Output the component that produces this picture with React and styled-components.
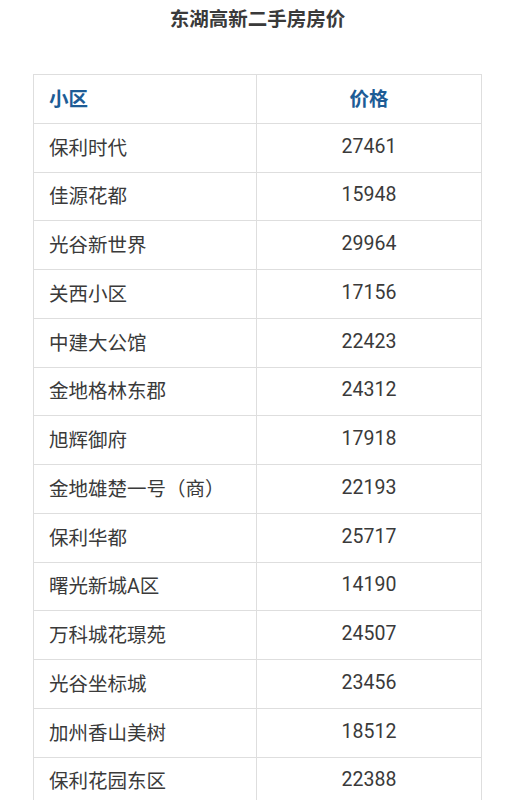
import styled, { createGlobalStyle } from "styled-components";

const rows = [
  ["保利时代", "27461"],
  ["佳源花都", "15948"],
  ["光谷新世界", "29964"],
  ["关西小区", "17156"],
  ["中建大公馆", "22423"],
  ["金地格林东郡", "24312"],
  ["旭辉御府", "17918"],
  ["金地雄楚一号（商）", "22193"],
  ["保利华都", "25717"],
  ["曙光新城A区", "14190"],
  ["万科城花璟苑", "24507"],
  ["光谷坐标城", "23456"],
  ["加州香山美树", "18512"],
  ["保利花园东区", "22388"],
];

function App() {
  return (
    <Page>
      <GlobalStyle />
      <Title>东湖高新二手房房价</Title>
      <Table>
        <Row>
          <Cell head>小区</Cell>
          <Cell head center>价格</Cell>
        </Row>
        {rows.map(([name, price]) => (
          <Row key={name}>
            <Cell>{name}</Cell>
            <Cell center>{price}</Cell>
          </Row>
        ))}
      </Table>
    </Page>
  );
}

const GlobalStyle = createGlobalStyle`
  body {
    margin: 0;
    background: #fff;
    font-family: Roboto, "Noto Sans CJK SC", sans-serif;
  }
`;

const Page = styled.div`
  width: 515px;
  height: 800px;
  overflow: hidden;
  background: #fff;
`;

const Title = styled.h1`
  margin: 0;
  padding-top: 7px;
  line-height: 26px;
  font-size: 19.5px;
  font-weight: 700;
  color: #3a3a3a;
  text-align: center;
`;

const Table = styled.div`
  margin: 41px 0 0 33px;
  width: 449px;
  border: 1.5px solid #dedede;
  border-bottom: none;
  box-sizing: border-box;
`;

const Row = styled.div`
  display: grid;
  grid-template-columns: 222px 1fr;
  height: 48.75px;
  box-sizing: border-box;
  border-bottom: 1.5px solid #dedede;
`;

const Cell = styled.div`
  display: flex;
  align-items: center;
  justify-content: ${(p) => (p.center ? "center" : "flex-start")};
  padding-left: ${(p) => (p.center ? "0" : "15px")};
  padding-bottom: 3px;
  font-size: 19.5px;
  font-weight: ${(p) => (p.head ? 700 : 400)};
  color: ${(p) => (p.head ? "#1d5c96" : "#3a3a3a")};
  & + & {
    border-left: 1.5px solid #dedede;
  }
`;

export default App;
